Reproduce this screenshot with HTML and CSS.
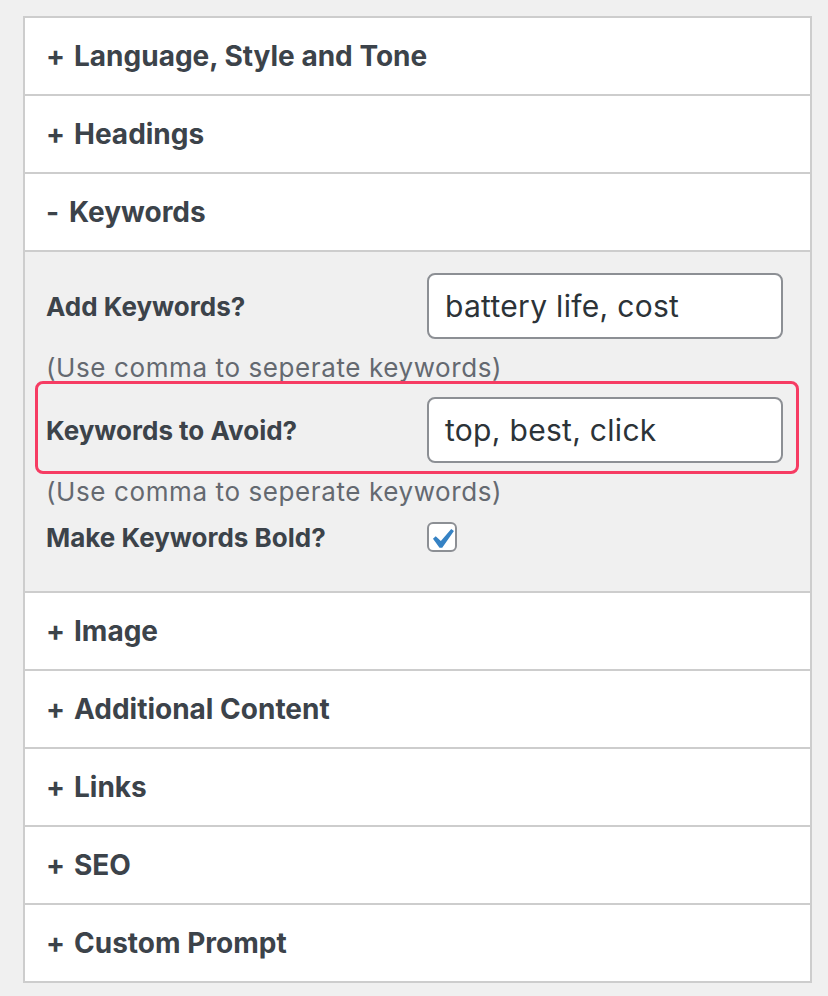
FILE: index.html
```html
<!DOCTYPE html>
<html lang="en">
<head>
<meta charset="utf-8">
<title>Settings</title>
<link rel="stylesheet" href="styles.css">
</head>
<body>
<div class="box">
  <div class="head"><span class="sign">+</span>Language, Style and Tone</div>
  <div class="head"><span class="sign">+</span>Headings</div>
  <div class="head"><span class="sign minus">-</span>Keywords</div>
  <div class="panel">
    <div class="row">
      <label class="label">Add Keywords?</label>
      <div class="input">battery life, cost</div>
    </div>
    <div class="hint">(Use comma to seperate keywords)</div>
    <div class="row highlight">
      <label class="label">Keywords to Avoid?</label>
      <div class="input">top, best, click</div>
    </div>
    <div class="hint second">(Use comma to seperate keywords)</div>
    <div class="row check-row">
      <label class="label">Make Keywords Bold?</label>
      <span class="checkbox"><svg width="26" height="26" viewBox="3.8 2.4 12.9 12.9"><path d="M14.83 4.89l1.34.94-5.81 8.38H9.02L5.78 9.67l1.34-1.25 2.57 2.4z" fill="#3582c4"/></svg></span>
    </div>
  </div>
  <div class="head"><span class="sign">+</span>Image</div>
  <div class="head"><span class="sign">+</span>Additional Content</div>
  <div class="head"><span class="sign">+</span>Links</div>
  <div class="head"><span class="sign">+</span>SEO</div>
  <div class="head last"><span class="sign">+</span>Custom Prompt</div>
</div>
</body>
</html>
```
FILE: styles.css
```css
html, body {
  margin: 0;
  padding: 0;
  background: #f0f0f0;
}
body {
  padding: 16px 0 0 23px;
  font-family: Inter, "Noto Sans", sans-serif;
  color: #3c434a;
}
.box {
  width: 785px;
  border: 2px solid #cdcdcd;
  background: #fff;
}
.head {
  height: 76px;
  border-bottom: 2px solid #cdcdcd;
  display: flex;
  align-items: center;
  padding-left: 21px;
  font-size: 28px;
  font-weight: 700;
}
.head.last {
  border-bottom: none;
}
.sign {
  width: 28px;
}
.sign.minus {
  width: 23px;
}
.panel {
  background: #f0f0f0;
  border-bottom: 2px solid #cdcdcd;
  padding: 21px 27px 39px 21px;
}
.row {
  display: flex;
  align-items: center;
  height: 66px;
  position: relative;
}
.label {
  width: 381px;
  font-size: 26px;
  font-weight: 700;
  color: #3c434a;
}
.input {
  flex: 1;
  height: 62px;
  border: 2px solid #8c8f94;
  border-radius: 8px;
  background: #fff;
  display: flex;
  align-items: center;
  padding-left: 16px;
  font-size: 30px;
  letter-spacing: 0.3px;
  color: #2c3338;
}
.hint {
  margin: 12px 0;
  line-height: 34px;
  font-size: 26px;
  letter-spacing: 0.6px;
  color: #646970;
}
.hint.second {
  margin-bottom: 0;
}
.highlight::after {
  content: "";
  position: absolute;
  left: -11px;
  right: -16px;
  top: -16px;
  bottom: -11px;
  border: 3px solid #f63c63;
  border-radius: 8px;
  pointer-events: none;
}
.check-row {
  height: 30px;
  margin-top: 13px;
}
.checkbox {
  width: 26px;
  height: 26px;
  border: 2px solid #8c8f94;
  border-radius: 6px;
  background: #fff;
  display: flex;
}
```
